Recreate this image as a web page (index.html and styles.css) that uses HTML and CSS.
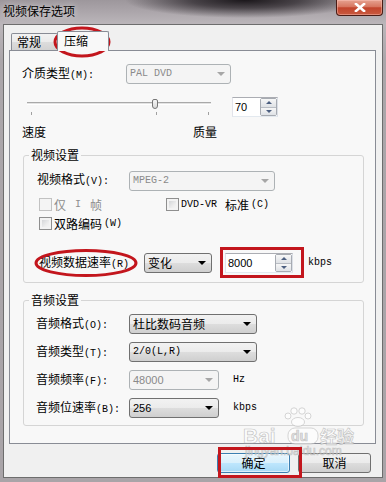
FILE: index.html
```html
<!DOCTYPE html>
<html lang="zh-CN">
<head>
<meta charset="utf-8">
<title>视频保存选项</title>
<link rel="stylesheet" href="styles.css">
</head>
<body>
<div class="window">
  <div class="titlebar">
    <span class="title">视频保存选项</span>
    <div class="close"><svg width="14" height="9" viewBox="0 0 14 9"><path d="M3 1 L11 8 M11 1 L3 8" stroke="#fff" stroke-width="2.6" stroke-linecap="square"/></svg></div>
  </div>
  <div class="client">
    <div class="tabs">
      <div class="tab">常规</div>
      <div class="tab active">压缩</div>
    </div>
    <div class="panel">
      <div class="row r-media">
        <span class="lbl w104">介质类型<span class="l">(M):</span></span>
        <div class="combo disabled w105"><span class="l">PAL DVD</span><i class="arrow"></i></div>
      </div>
      <div class="row r-slider">
        <div class="slider">
          <div class="track"></div>
          <span class="tick" style="left:4px"></span>
          <span class="tick" style="left:129px"></span>
          <span class="tick" style="left:181px"></span>
          <div class="thumb" style="left:125px"></div>
        </div>
        <div class="spinbox w46"><span class="val">70</span><div class="spin"><span><i class="up"></i></span><span><i class="down"></i></span></div></div>
      </div>
      <div class="row r-scale"><span class="w171">速度</span><span>质量</span></div>

      <fieldset class="group g-video">
        <legend>视频设置</legend>
        <div class="gbody">
          <div class="row h19">
            <span class="lbl w92">视频格式<span class="l">(V):</span></span>
            <div class="combo disabled w146 h19"><span class="l">MPEG-2</span><i class="arrow"></i></div>
          </div>
          <div class="checks">
            <label class="chk off"><i class="cb"></i>仅<span class="l sp">I</span>帧</label>
            <label class="chk"><i class="cb"></i><span class="l sp-r">DVD-VR</span>标准<span class="l">(C)</span></label>
            <label class="chk"><i class="cb"></i>双路编码<span class="l">(W)</span></label>
          </div>
          <div class="row r-rate">
            <span class="lbl w105">视频数据速率<span class="l">(R)</span></span>
            <div class="combo w68"><span>变化</span><i class="arrow"></i></div>
            <div class="spinbox w68 ml13"><span class="val">8000</span><div class="spin"><span><i class="up"></i></span><span><i class="down"></i></span></div></div>
            <span class="l unit ml15">kbps</span>
          </div>
        </div>
      </fieldset>

      <fieldset class="group g-audio">
        <legend>音频设置</legend>
        <div class="gbody">
          <div class="row">
            <span class="lbl w93">音频格式<span class="l">(O):</span></span>
            <div class="combo w128"><span>杜比数码音频</span><i class="arrow"></i></div>
          </div>
          <div class="row">
            <span class="lbl w93">音频类型<span class="l">(T):</span></span>
            <div class="combo w128"><span class="l">2/0(L,R)</span><i class="arrow"></i></div>
          </div>
          <div class="row">
            <span class="lbl w93">音频频率<span class="l">(F):</span></span>
            <div class="combo disabled w90"><span class="num">48000</span><i class="arrow"></i></div>
            <span class="l unit ml14">Hz</span>
          </div>
          <div class="row">
            <span class="lbl w93">音频位速率<span class="l">(B):</span></span>
            <div class="combo w90"><span class="num">256</span><i class="arrow"></i></div>
            <span class="l unit ml14">kbps</span>
          </div>
        </div>
      </fieldset>
    </div>
    <div class="buttons">
      <button class="btn default">确定</button>
      <button class="btn">取消</button>
    </div>
  </div>
</div>

<svg class="overlay" width="386" height="482" viewBox="0 0 386 482">
  <g class="watermark">
    <circle cx="288" cy="416" r="3"/>
    <circle cx="294" cy="411" r="3.2"/>
    <circle cx="302" cy="411" r="3.2"/>
    <circle cx="308" cy="416" r="3"/>
    <ellipse cx="298" cy="422" rx="6.5" ry="4.5"/>
    <text x="243" y="443" class="wm-big">Bai</text>
    <rect x="288" y="428" width="30" height="16" rx="7"/>
    <text x="291" y="441" class="wm-du">du</text>
    <text x="320" y="443" class="wm-cn">经验</text>
    <text x="245" y="455" class="wm-url">jingyan.baidu.com</text>
  </g>
  <g class="marks">
    <ellipse cx="82" cy="42" rx="27" ry="14"/>
    <ellipse cx="86" cy="263" rx="50" ry="12.5"/>
    <rect x="221.5" y="248.5" width="81" height="28"/>
    <rect x="219.5" y="448.5" width="81" height="28"/>
  </g>
</svg>
</body>
</html>
```

FILE: styles.css
```css
* { box-sizing: border-box; }
html, body { margin: 0; padding: 0; }
body {
  width: 386px;
  height: 482px;
  overflow: hidden;
  position: relative;
  font-family: "Noto Sans CJK SC", "Liberation Sans", sans-serif;
  font-size: 12px;
  line-height: 14px;
  color: #000;
  background:
    radial-gradient(ellipse 120px 18px at 245px 0px, rgba(20,16,20,0.95) 0%, rgba(35,30,35,0.7) 45%, rgba(60,55,60,0) 100%),
    linear-gradient(180deg, #9d979c 0px, #aca6ab 12px, #bbb6ba 24px, #aba6aa 60px, #a9a4a8 100%);
}

.window { display: flex; flex-direction: column; height: 482px; }

.titlebar { height: 24px; display: flex; align-items: flex-start; padding-left: 3px; }
.title { margin-top: 4px; text-shadow: 0 0 6px rgba(255,255,255,0.7); }
.close {
  margin-left: auto;
  margin-right: 3px;
  width: 47px;
  height: 16px;
  display: flex;
  align-items: center;
  justify-content: center;
  border: 1px solid #4a1c15;
  border-top: none;
  border-radius: 0 0 4px 4px;
  background: linear-gradient(180deg, #e6a290 0%, #d77660 45%, #c2442c 52%, #c85a40 100%);
  box-shadow: inset 0 0 0 1px rgba(255,200,190,0.45);
}

.client {
  margin: 0 3px;
  height: 454px;
  border: 1px solid #6d6d6d;
  background: #f0f0f0;
  padding: 6px 5px 0 5px;
}

.tabs { display: flex; align-items: flex-start; height: 19px; padding-left: 2px; }
.tab {
  width: 47px;
  height: 17px;
  margin-top: 2px;
  padding-left: 5px;
  line-height: 15px;
  border: 1px solid #898c95;
  border-bottom: none;
  border-radius: 2px 2px 0 0;
  background: linear-gradient(180deg, #f2f2f2 0%, #ebebeb 50%, #dddddd 51%, #d2d2d2 100%);
}
.tab.active {
  width: 52px;
  height: 20px;
  margin-top: 0;
  margin-left: -1px;
  padding-left: 6px;
  line-height: 17px;
  background: #f8f8f8;
  position: relative;
  z-index: 1;
}

.panel {
  width: 367px;
  height: 394px;
  border: 1px solid #898c95;
  background: #f8f8f8;
  padding-top: 13px;
}

.row { display: flex; align-items: center; height: 20px; }
.h19 { height: 19px; }
.l { font-family: "Liberation Mono", monospace; font-size: 10px; }
.sp { margin: 0 7px; }
.sp-r { margin-right: 6px; }
.num { font-family: "Liberation Sans", sans-serif; font-size: 11px; }
.lbl { flex: none; white-space: nowrap; }
.w92 { width: 92px; } .w93 { width: 93px; } .w104 { width: 104px; } .w105 { width: 105px; }
.w46 { width: 46px; } .w68 { width: 68px; } .w90 { width: 90px; } .w128 { width: 128px; }
.w146 { width: 146px; } .w171 { width: 171px; }
.ml13 { margin-left: 13px; } .ml14 { margin-left: 14px; } .ml15 { margin-left: 15px; }

.r-media { padding-left: 12px; }

.combo {
  flex: none;
  height: 20px;
  display: flex;
  align-items: center;
  padding-left: 3px;
  border: 1px solid #707070;
  border-radius: 3px;
  background: linear-gradient(180deg, #f2f2f2 0%, #ebebeb 50%, #dddddd 51%, #cfcfcf 100%);
  white-space: nowrap;
}
.combo .arrow {
  margin-left: auto;
  margin-right: 5px;
  width: 0; height: 0;
  border-left: 4px solid transparent;
  border-right: 4px solid transparent;
  border-top: 4px solid #000;
}
.combo.disabled {
  border-color: #adb2b5;
  background: #f4f4f4;
  color: #8a8a8a;
}
.combo.disabled .arrow { border-top-color: #a6a6a6; }

.r-slider { margin-top: 13px; padding-left: 17px; }
.slider { position: relative; width: 184px; height: 20px; flex: none; }
.track {
  position: absolute;
  left: 0; right: 0; top: 5px;
  height: 3px;
  border-top: 1px solid #a9a9a9;
  border-bottom: 1px solid #ffffff;
  background: #e3e3e3;
}
.tick { position: absolute; top: 15px; width: 1px; height: 3px; background: #a0a0a0; }
.thumb {
  position: absolute;
  top: 2px;
  width: 6px;
  height: 10px;
  border: 1px solid #767676;
  border-radius: 2px 2px 3px 3px;
  background: linear-gradient(180deg, #f6f6f6, #dadada);
}

.spinbox {
  flex: none;
  display: flex;
  height: 20px;
  border: 1px solid #abadb3;
  border-color: #abadb3 #dbdfe6 #e3e9ef #e2e3ea;
  background: #fff;
}
.r-slider .spinbox { margin-left: 21px; }
.spinbox .val {
  flex: 1;
  font-family: "Liberation Sans", sans-serif;
  font-size: 11px;
  line-height: 18px;
  padding-left: 2px;
}
.spin {
  width: 17px;
  display: flex;
  flex-direction: column;
  border: 1px solid #a7abb2;
  border-radius: 2px;
}
.spin span {
  flex: 1;
  display: flex;
  align-items: center;
  justify-content: center;
  background: linear-gradient(180deg, #f7f7f7, #dfe2e6);
}
.spin span + span { border-top: 1px solid #b9bdc4; }
.spin .up, .spin .down {
  width: 0; height: 0;
  border-left: 3px solid transparent;
  border-right: 3px solid transparent;
}
.spin .up { border-bottom: 3px solid #4c5f80; }
.spin .down { border-top: 3px solid #4c5f80; }

.r-scale { margin-top: 8px; height: 14px; padding-left: 12px; }

.group {
  margin: 9px 0 0 13px;
  padding: 0;
  width: 341px;
  border: 1px solid #d5d5d5;
  border-radius: 3px;
  min-inline-size: 0;
}
.group legend {
  margin-left: 5px;
  padding: 0 2px;
  line-height: 14px;
}
.g-audio { margin-top: 10px; }

.g-video .gbody { padding: 9px 0 9px 13px; }
.checks {
  display: grid;
  grid-template-columns: 127px auto;
  row-gap: 6px;
  margin-top: 8px;
  padding-left: 2px;
}
.chk { display: flex; align-items: center; gap: 2px; height: 13px; white-space: nowrap; }
.chk.off { color: #8d8d8d; }
.cb {
  flex: none;
  width: 13px;
  height: 13px;
  border: 1px solid #8f8f8f;
  background: linear-gradient(135deg, #c9cbcf 0%, #eeeeee 60%, #f8f8f8 100%);
  box-shadow: inset 0 0 0 2px #f3f3f3;
}
.chk.off .cb { border-color: #c2c2c2; background: #f4f4f4; box-shadow: none; }
.r-rate { margin-top: 23px; padding-left: 2px; }
.unit { white-space: nowrap; }

.g-audio .gbody {
  padding: 7px 0 7px 12px;
  display: flex;
  flex-direction: column;
  gap: 8px;
}

.buttons {
  display: flex;
  justify-content: flex-end;
  gap: 8px;
  margin-top: 9px;
  padding-right: 6px;
}
.btn {
  width: 73px;
  height: 20px;
  padding: 0;
  font: inherit;
  line-height: 18px;
  color: #000;
  border: 1px solid #707070;
  border-radius: 3px;
  background: linear-gradient(180deg, #f2f2f2 0%, #ebebeb 50%, #dddddd 51%, #cfcfcf 100%);
}
.btn.default {
  border-color: #3c7fb1;
  background: linear-gradient(180deg, #eaf6fd 0%, #d9f0fc 50%, #bee6fd 51%, #a7d9f5 100%);
  box-shadow: inset 0 0 0 1px rgba(255,255,255,0.6);
}

.overlay { position: absolute; left: 0; top: 0; pointer-events: none; }
.marks ellipse, .marks rect { fill: none; stroke: #c3161d; stroke-width: 3; }
.watermark { opacity: 0.7; }
.watermark circle, .watermark ellipse, .watermark rect { fill: #ffffff; stroke: #b8b8b8; stroke-width: 0.8; }
.watermark text { fill: #ffffff; stroke: #b0b0b0; stroke-width: 0.7; }
.wm-big { font-family: "Liberation Sans", sans-serif; font-weight: bold; font-size: 21px; }
.wm-du { font-family: "Liberation Sans", sans-serif; font-weight: bold; font-size: 14px; fill: #d8d8d8 !important; }
.wm-cn { font-family: "Noto Sans CJK SC", sans-serif; font-weight: bold; font-size: 17px; }
.wm-url { font-family: "Liberation Sans", sans-serif; font-size: 12px; }
```
